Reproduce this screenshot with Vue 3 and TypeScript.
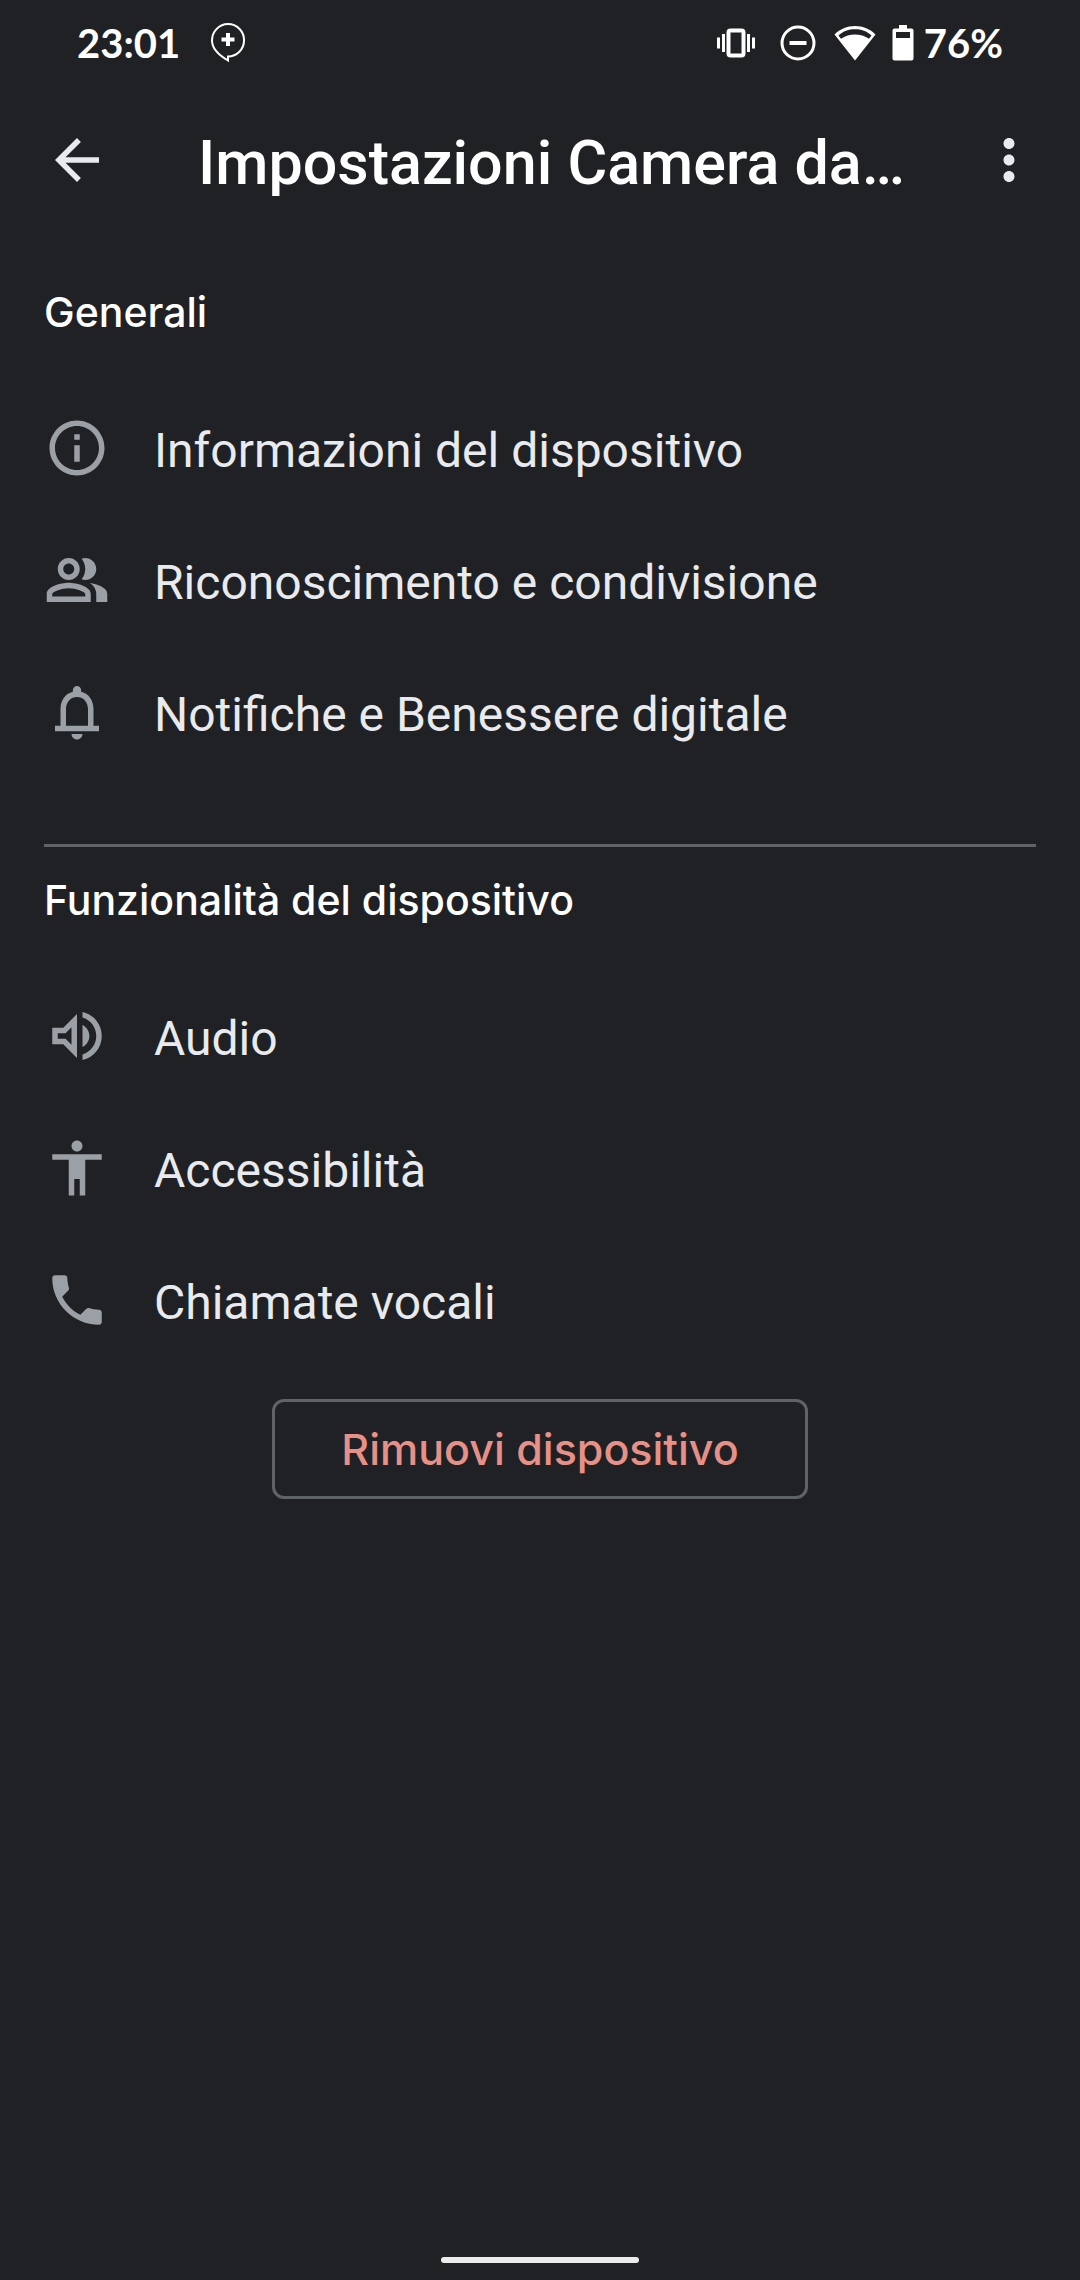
<script setup lang="ts">
interface Item {
  label: string
  icon: string
}

interface Section {
  title: string
  items: Item[]
}

const sections: Section[] = [
  {
    title: 'Generali',
    items: [
      {
        label: 'Informazioni del dispositivo',
        icon: 'M11 7h2v2h-2zm0 4h2v6h-2zm1-9C6.48 2 2 6.48 2 12s4.48 10 10 10 10-4.48 10-10S17.52 2 12 2zm0 18c-4.41 0-8-3.59-8-8s3.59-8 8-8 8 3.59 8 8-3.59 8-8 8z',
      },
      {
        label: 'Riconoscimento e condivisione',
        icon: 'M9 12c2.21 0 4-1.79 4-4s-1.79-4-4-4-4 1.79-4 4 1.79 4 4 4zm0-6c1.1 0 2 .9 2 2s-.9 2-2 2-2-.9-2-2 .9-2 2-2zM9 13c-2.67 0-8 1.34-8 4v3h16v-3c0-2.66-5.33-4-8-4zm6 5H3v-.99C3.2 16.29 6.3 15 9 15s5.8 1.29 6 2v1zM15 12c2.21 0 4-1.79 4-4s-1.79-4-4-4c-.47 0-.91.1-1.33.24C14.5 5.27 15 6.58 15 8s-.5 2.73-1.33 3.76c.42.14.86.24 1.33.24zM16.67 13.13C18.04 14.06 19 15.32 19 17v3h4v-3c0-2.18-3.58-3.47-6.33-3.87z',
      },
      {
        label: 'Notifiche e Benessere digitale',
        icon: 'M18 17v-6c0-3.07-1.63-5.64-4.5-6.32V4c0-.83-.67-1.5-1.5-1.5s-1.5.67-1.5 1.5v.68C7.64 5.36 6 7.92 6 11v6H4v2h16v-2zm-2 0H8v-6c0-2.48 1.51-4.5 4-4.5s4 2.02 4 4.5zM12 22c1.1 0 2-.9 2-2h-4c0 1.1.9 2 2 2z',
      },
    ],
  },
  {
    title: 'Funzionalità del dispositivo',
    items: [
      {
        label: 'Audio',
        icon: 'M3 9v6h4l5 5V4L7 9zm7-.17v6.34L7.83 13H5v-2h2.83zM14 7.97v8.05c1.48-.73 2.5-2.25 2.5-4.02 0-1.77-1.02-3.29-2.5-4.03zM14 3.23v2.06c2.89.86 5 3.54 5 6.71s-2.11 5.85-5 6.71v2.06c4.01-.91 7-4.49 7-8.77s-2.99-7.86-7-8.77z',
      },
      {
        label: 'Accessibilità',
        icon: 'M12 2c1.1 0 2 .9 2 2s-.9 2-2 2-2-.9-2-2 .9-2 2-2zm9 7h-6v13h-2v-6h-2v6H9V9H3V7h18z',
      },
      {
        label: 'Chiamate vocali',
        icon: 'M6.62 10.79c1.44 2.83 3.76 5.14 6.59 6.59l2.2-2.2c.27-.27.67-.36 1.02-.24 1.12.37 2.33.57 3.57.57.55 0 1 .45 1 1V20c0 .55-.45 1-1 1-9.39 0-17-7.61-17-17 0-.55.45-1 1-1h3.5c.55 0 1 .45 1 1 0 1.25.2 2.45.57 3.57.11.35.03.74-.25 1.02z',
      },
    ],
  },
]
</script>

<template>
  <div class="screen">
    <header class="status">
      <span class="clock">23:01</span>
      <svg class="bubble" viewBox="0 0 36 42" aria-hidden="true">
        <path d="M18 2A16 16.500 0 0 0 2 18.500C2 27 8.500 33 18 38.500V34.500a16 16.200 0 0 0 0-32.500z" fill="none" stroke="#fff" stroke-width="2" />
        <path d="M18 11v13M11.500 17.500h13" stroke="#fff" stroke-width="4" />
      </svg>
      <div class="indicators">
        <svg class="vibrate" viewBox="0 0 40 30" aria-hidden="true">
          <rect x="12.500" y="2.500" width="15" height="25" rx="2" fill="none" stroke="#fff" stroke-width="4" />
          <path d="M2.500 9.500v11M7.500 6v18M32.500 6v18M37.500 9.500v11" stroke="#fff" stroke-width="3" />
        </svg>
        <svg class="dnd" viewBox="0 0 36 36" aria-hidden="true">
          <circle cx="18" cy="18" r="16" fill="none" stroke="#fff" stroke-width="3" />
          <path d="M9.500 18h17" stroke="#fff" stroke-width="4" />
        </svg>
        <svg class="wifi" viewBox="0 0 42 36" aria-hidden="true">
          <path d="M21 35.500 0.500 9.500C6 4 13 1 21 1s15 3 20.500 8.500z" fill="#fff" />
          <path d="M4.500 10.500C9 6 15 4.200 21 4.200s12 1.800 16.500 6.300l-2.500 3.200C31 11 26 9.500 21 9.500S11 11 7 13.700z" fill="#202124" />
        </svg>
        <svg class="battery" viewBox="0 0 22 36" aria-hidden="true">
          <path d="M7 0h8v3.500h4.500q2 0 2 2v28q0 2-2 2h-17q-2 0-2-2v-28q0-2 2-2H7zM4 7v6h14V7z" fill="#fff" fill-rule="evenodd" />
        </svg>
        <span class="percent">76%</span>
      </div>
    </header>

    <div class="appbar">
      <button class="icon-button" type="button" aria-label="Indietro">
        <svg class="icon" viewBox="0 0 24 24"><path d="M20 11H7.83l5.59-5.59L12 4l-8 8 8 8 1.41-1.41L7.83 13H20z" /></svg>
      </button>
      <h1 class="title">Impostazioni Camera da…</h1>
      <button class="icon-button" type="button" aria-label="Altre opzioni">
        <svg class="icon" viewBox="0 0 24 24"><path d="M12 8c1.1 0 2-.9 2-2s-.9-2-2-2-2 .9-2 2 .9 2 2 2zm0 2c-1.1 0-2 .9-2 2s.9 2 2 2 2-.9 2-2-.9-2-2-2zm0 6c-1.1 0-2 .9-2 2s.9 2 2 2 2-.9 2-2-.9-2-2-2z" /></svg>
      </button>
    </div>

    <main class="content">
      <section v-for="section in sections" :key="section.title" class="section">
        <h2 class="heading">{{ section.title }}</h2>
        <ul class="list">
          <li v-for="item in section.items" :key="item.label">
            <a class="row" href="#">
              <svg class="icon" viewBox="0 0 24 24" aria-hidden="true"><path :d="item.icon" /></svg>
              <span>{{ item.label }}</span>
            </a>
          </li>
        </ul>
      </section>
      <button class="remove" type="button">Rimuovi dispositivo</button>
    </main>

    <footer class="nav"><div class="handle"></div></footer>
  </div>
</template>

<style>
body {
  margin: 0;
  background: #202124;
}
</style>

<style scoped>
.screen {
  display: flex;
  flex-direction: column;
  box-sizing: border-box;
  min-height: 100vh;
  background: #202124;
  color: #fff;
  font-family: Roboto, "Liberation Sans", sans-serif;
}

.status {
  display: flex;
  align-items: center;
  height: 86px;
  padding: 0 77px;
  font-family: Lato, Roboto, sans-serif;
  font-size: 40px;
  font-weight: 700;
  line-height: 48px;
}

.bubble {
  width: 36px;
  height: 42px;
  margin-left: 30px;
}

.indicators {
  display: flex;
  align-items: center;
  margin-left: auto;
}

.vibrate {
  width: 40px;
  height: 30px;
}

.dnd {
  width: 36px;
  height: 36px;
  margin-left: 24px;
}

.wifi {
  width: 42px;
  height: 36px;
  margin-left: 18px;
}

.battery {
  width: 22px;
  height: 36px;
  margin: 0 10px 0 16px;
}

.appbar {
  display: flex;
  align-items: center;
  height: 144px;
  margin-top: 2px;
  padding: 0 38px 0 44px;
}

.icon-button {
  flex: none;
  padding: 0;
  border: 0;
  background: none;
  color: #e8eaed;
}

.icon {
  display: block;
  flex: none;
  width: 66px;
  height: 66px;
  fill: currentColor;
}

.title {
  flex: 1;
  overflow: hidden;
  margin: 6px 0 0 88px;
  font-size: 61px;
  font-weight: 500;
  line-height: 72px;
  white-space: nowrap;
}

.content {
  display: flex;
  flex: 1;
  flex-direction: column;
  padding: 0 44px;
}

.section + .section {
  margin-top: 64px;
  border-top: 3px solid #5f6368;
}

.heading {
  margin: 0;
  padding: 25px 0 44px;
  font-family: Inter, Roboto, sans-serif;
  font-size: 41px;
  font-weight: 500;
  line-height: 56px;
}

.section:first-child .heading {
  padding-top: 52px;
}

.list {
  margin: 0;
  padding: 0;
  list-style: none;
}

.row {
  display: flex;
  align-items: center;
  gap: 44px;
  box-sizing: border-box;
  height: 132px;
  padding-top: 2px;
  color: #e8eaed;
  font-size: 48px;
  line-height: 60px;
  text-decoration: none;
}

.row .icon {
  margin-bottom: 6px;
  color: #9aa0a6;
}

.remove {
  align-self: center;
  height: 100px;
  margin-top: 31px;
  padding: 0 66px;
  border: 3px solid #5f6368;
  border-radius: 12px;
  background: none;
  color: #e69087;
  font-family: Inter, Roboto, sans-serif;
  font-size: 43px;
  font-weight: 500;
}

.nav {
  display: flex;
  justify-content: center;
  padding: 16px 0 17px;
}

.handle {
  width: 198px;
  height: 6px;
  border-radius: 3px;
  background: #ececec;
}
</style>
